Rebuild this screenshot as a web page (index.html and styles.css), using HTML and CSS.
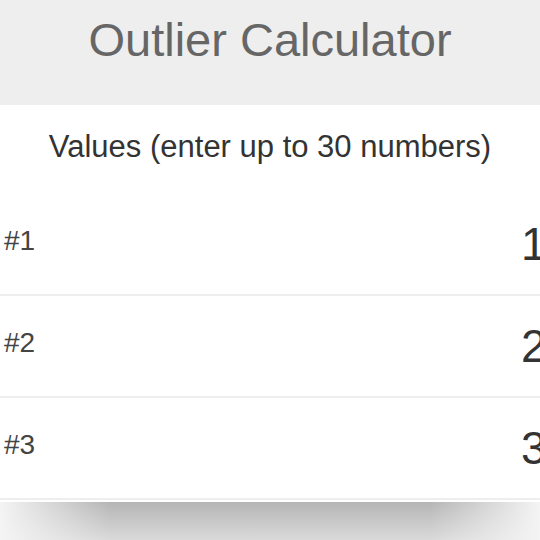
FILE: index.html
```html
<!DOCTYPE html>
<html lang="en">
<head>
<meta charset="utf-8">
<title>Outlier Calculator</title>
<link rel="stylesheet" href="styles.css">
</head>
<body>
<header class="top">
  <h1 class="title">Outlier Calculator</h1>
</header>
<main class="values">
  <h2 class="subtitle">Values (enter up to 30 numbers)</h2>
  <ul class="rows">
    <li class="row"><span class="label">#1</span><span class="value">1</span></li>
    <li class="row"><span class="label">#2</span><span class="value">2</span></li>
    <li class="row"><span class="label">#3</span><span class="value">3</span></li>
  </ul>
</main>
<div class="shade"></div>
</body>
</html>
```

FILE: styles.css
```css
html, body {
  margin: 0;
  padding: 0;
  overflow: hidden;
  background: #ffffff;
}
body {
  font-family: "Liberation Sans", Arial, Helvetica, sans-serif;
  width: 540px;
}
.top {
  background: #eeeeee;
  height: 105px;
  box-sizing: border-box;
  padding-top: 16px;
}
.title {
  margin: 0;
  font-size: 47px;
  line-height: 48px;
  font-weight: normal;
  color: #666666;
  text-align: center;
}
.subtitle {
  margin: 0;
  padding: 24px 0 29px;
  font-size: 31px;
  line-height: 36px;
  font-weight: normal;
  color: #333333;
  text-align: center;
}
.rows {
  list-style: none;
  margin: 0;
  padding: 0;
}
.row {
  display: grid;
  grid-template-columns: 517px 1fr;
  align-items: center;
  height: 100px;
  padding-left: 4px;
  border-bottom: 2px solid #eeeeee;
}
.label {
  font-size: 28px;
  line-height: 32px;
  color: #444444;
  margin-bottom: 7px;
}
.value {
  font-size: 46px;
  line-height: 50px;
  color: #333333;
  white-space: nowrap;
}
.shade {
  margin-top: 2px;
  height: 40px;
  background:
    linear-gradient(to right, #f4f4f4 0, rgba(244,244,244,0) 110px, rgba(244,244,244,0) 430px, #f4f4f4 540px),
    linear-gradient(to bottom, #b5b5b5, #dcdcdc);
}
```
